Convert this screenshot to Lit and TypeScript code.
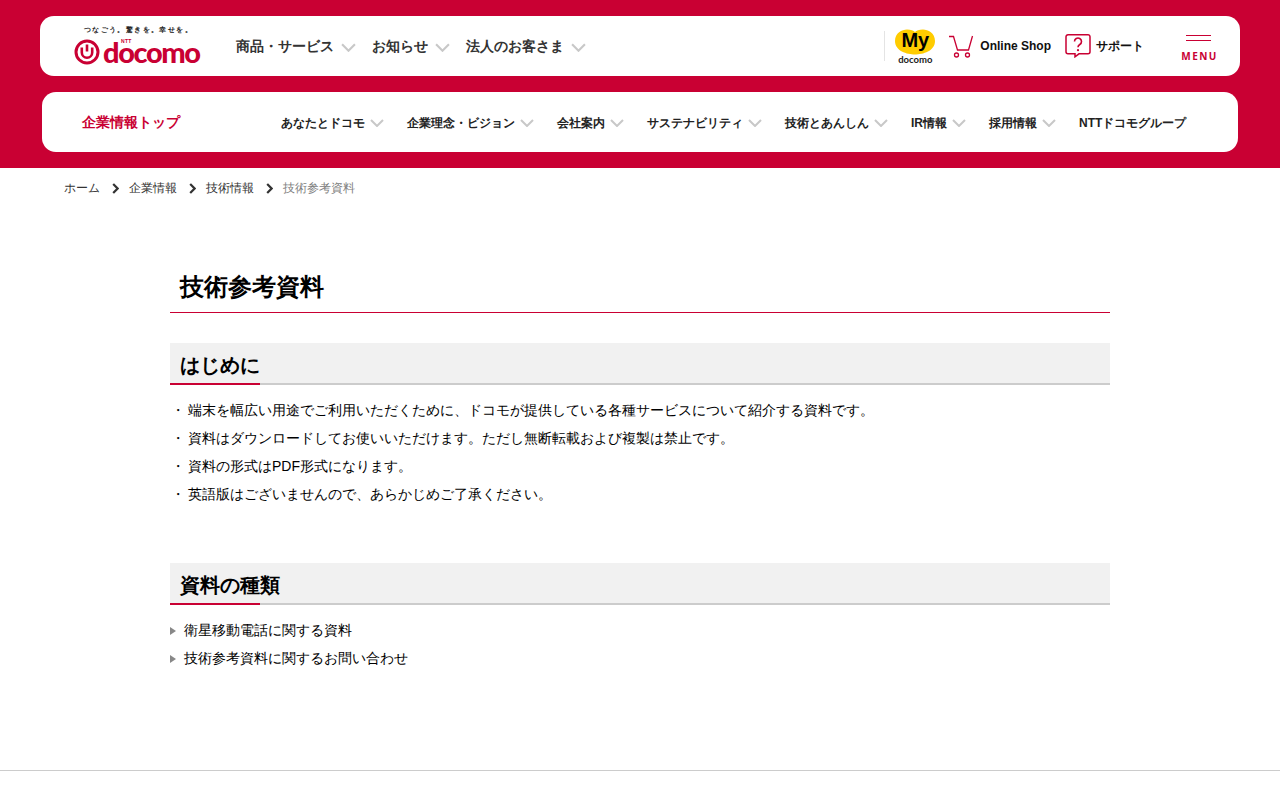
import { LitElement, html, css } from "lit";
import { customElement } from "lit/decorators.js";

const chev = (w = 14, h = 8) => html`<svg class="chev" width="${w}" height="${h}" viewBox="0 0 14 8"><path d="M1 1l6 6 6-6" fill="none" stroke="#c8c8c8" stroke-width="2"/></svg>`;
const crumbArrow = html`<svg class="crumb-arrow" width="7" height="11" viewBox="0 0 7 11"><path d="M1.200 1 5.600 5.500 1.200 10" fill="none" stroke="#333" stroke-width="2.200"/></svg>`;

@customElement("app-root")
export class AppRoot extends LitElement {
  static styles = css`
    :host { display: block; height: 800px; overflow: hidden; background: #fff; color: #000;
      font-family: "Liberation Sans", sans-serif; font-size: 14px; }
    a { color: inherit; text-decoration: none; }
    .hero { background: #c90033; height: 168px; box-sizing: border-box; padding: 16px 40px 0; }
    .card { background: #fff; height: 60px; border-radius: 14px; display: flex; align-items: center; box-sizing: border-box; }
    .logo { width: 126px; margin-left: 34px; display: flex; flex-direction: column; align-items: center; flex: none; }
    .tagline { font-size: 7px; font-weight: 700; line-height: 10px; letter-spacing: 1.400px; color: #222; white-space: nowrap; height: 10px; margin: -1px 0 0 3px; }
    .mark { display: flex; align-items: center; height: 28px; width: 126px; position: relative; margin-top: 3px; }
    .mark svg { flex: none; }
    .word { font-family: Lato, sans-serif; font-weight: 900; font-size: 29px; letter-spacing: -1.400px; color: #c90033; line-height: 28px; margin-left: 3px; margin-top: -1px; }
    .ntt { position: absolute; left: 47px; top: 0; font-size: 5px; font-weight: 700; color: #c90033; letter-spacing: .3px; line-height: 6px; }
    .main-nav { display: flex; margin: 2px 0 0 36px; gap: 16px; }
    .main-nav a { display: flex; align-items: center; font-size: 14px; font-weight: 700; color: #333; gap: 7px; white-space: nowrap; }
    .tools { margin-left: auto; display: flex; align-items: center; height: 60px; }
    .divider { width: 1px; height: 30px; background: #e4e4e4; margin-right: 10px; }
    .my { width: 40px; display: flex; flex-direction: column; align-items: center; margin-right: 13px; margin-top: 1px; }
    .my-word { font-family: Lato, sans-serif; font-size: 9.500px; line-height: 9px; font-weight: 700; color: #222; }
    .heart { position: relative; width: 40px; height: 26px; }
    .my-text { position: absolute; left: 0; right: 0; top: 0; text-align: center; font-size: 20px; line-height: 22px; font-weight: 700; color: #000; }
    .tool { display: flex; align-items: center; font-size: 12px; font-weight: 700; color: #111; white-space: nowrap; }
    .shop { gap: 6px; margin-right: 14px; }
    .support { gap: 5px; }
    .menu { width: 36px; margin: 2px 23px 0 37px; display: flex; flex-direction: column; align-items: center; color: #c90033; }
    .bars { width: 25px; height: 4px; border-top: 1px solid #c90033; border-bottom: 1px solid #c90033; margin: 3px 1px 0 0; }
    .menu-t { font-family: "Noto Sans", sans-serif; font-weight: 700; font-size: 10px; letter-spacing: 1.400px; line-height: 12px; margin: 9px 0 0 1px; white-space: nowrap; }
    .sub { margin: 16px 2px 0; padding-top: 2px; }
    .sub-top { font-size: 14px; font-weight: 700; color: #c90033; margin-left: 40px; width: 199px; flex: none; white-space: nowrap; }
    .sub-nav { display: flex; align-items: center; }
    .sub-nav a { display: flex; align-items: center; font-size: 12px; font-weight: 700; color: #222; gap: 5px; white-space: nowrap; margin-right: 23px; }
    .crumbs { display: flex; align-items: center; height: 38px; padding: 1px 0 1px 64px; font-size: 12px; color: #333; }
    .crumb-arrow { margin: 0 10px 0 12px; }
    .crumbs .cur { color: #808080; }
    main { width: 940px; margin: 0 auto; }
    h1 { margin: 60px 0 0; height: 45px; box-sizing: border-box; padding: 0 10px; border-bottom: 1px solid #c90033; font-size: 24px; line-height: 38px; font-weight: 700; }
    h2 { position: relative; margin: 30px 0 0; height: 42px; box-sizing: border-box; padding: 8px 10px 0; background: #f1f1f1; border-bottom: 2px solid #ccc; font-size: 20px; line-height: 29px; font-weight: 700; }
    h2::after { content: ""; position: absolute; left: 0; bottom: -2px; width: 90px; height: 2px; background: #c90033; }
    .notes { list-style: none; margin: 11px 0 0; padding: 0 0 0 18px; }
    .notes li { position: relative; line-height: 28px; }
    .notes li::before { content: "・"; position: absolute; left: -21px; width: 21px; text-align: center; }
    .sec2 { margin-top: 55px; }
    .links { list-style: none; margin: 12px 0 0; padding: 0; }
    .links li { display: flex; align-items: center; height: 28px; gap: 8px; }
    .links i { width: 0; height: 0; border-left: 6px solid #888; border-top: 4.5px solid transparent; border-bottom: 4.5px solid transparent; margin-top: -1px; }
    footer { border-top: 1px solid #ccc; margin-top: 97px; height: 40px; }
  `;

  render() {
    const subs = ["あなたとドコモ", "企業理念・ビジョン", "会社案内", "サステナビリティ", "技術とあんしん", "IR情報", "採用情報"];
    return html`
      <header class="hero">
        <div class="card">
          <a class="logo" href="#">
            <div class="tagline">つなごう。驚きを。幸せを。</div>
            <div class="mark">
              <svg width="26" height="26" viewBox="0 0 26 26">
                <circle cx="13" cy="13" r="11" fill="none" stroke="#c90033" stroke-width="3"/>
                <path d="M7.800 8.500v5a5.200 5.200 0 0 0 10.400 0v-5" fill="none" stroke="#c90033" stroke-width="2.600"/>
                <path d="M13 5.500v7" stroke="#c90033" stroke-width="2.600"/>
              </svg>
              <span class="word">docomo</span><span class="ntt">NTT</span>
            </div>
          </a>
          <nav class="main-nav">
            <a href="#">商品・サービス ${chev(15, 9)}</a>
            <a href="#">お知らせ ${chev(15, 9)}</a>
            <a href="#">法人のお客さま ${chev(15, 9)}</a>
          </nav>
          <div class="tools">
            <div class="divider"></div>
            <a class="my" href="#">
              <div class="heart">
                <svg width="40" height="26" viewBox="0 0 40 26"><path d="M20 25.500C12 25.500 0 22 0 12 0 4 7 .5 12 .5c4 0 6.500 1 8 2.500 1.500-1.500 4-2.500 8-2.500 5 0 12 3.500 12 11.500 0 10-12 13.500-20 13.500z" fill="#ffcc00"/></svg>
                <span class="my-text">My</span>
              </div>
              <span class="my-word">docomo</span>
            </a>
            <a class="tool shop" href="#">
              <svg width="26" height="24" viewBox="0 0 26 24" fill="none" stroke="#c90033" stroke-width="1.300">
                <path d="M1 2.500h4.500l4 13.500h11l4-14"/><circle cx="8.500" cy="21" r="2"/><circle cx="19.500" cy="21" r="2"/>
              </svg>
              <span>Online Shop</span>
            </a>
            <a class="tool support" href="#">
              <svg width="26" height="24" viewBox="0 0 26 24" fill="none">
                <path d="M3 .8h20a2 2 0 0 1 2 2v15a2 2 0 0 1-2 2h-9l-4 3v-3H3a2 2 0 0 1-2-2v-15a2 2 0 0 1 2-2z" stroke="#c90033" stroke-width="1.500"/>
                <path d="M9.500 7.500a3.500 3.500 0 1 1 5.300 3c-1.200.8-1.800 1.300-1.800 2.800" stroke="#c90033" stroke-width="1.600"/>
                <circle cx="13" cy="16.200" r="1.100" fill="#c90033"/>
              </svg>
              <span>サポート</span>
            </a>
            <a class="menu" href="#"><div class="bars"></div><div class="menu-t">MENU</div></a>
          </div>
        </div>
        <div class="card sub">
          <a class="sub-top" href="#">企業情報トップ</a>
          <nav class="sub-nav">
            ${subs.map((s) => html`<a href="#">${s}${chev()}</a>`)}
            <a href="#">NTTドコモグループ</a>
          </nav>
        </div>
      </header>
      <nav class="crumbs">
        <a href="#">ホーム</a>${crumbArrow}<a href="#">企業情報</a>${crumbArrow}<a href="#">技術情報</a>${crumbArrow}<span class="cur">技術参考資料</span>
      </nav>
      <main>
        <h1>技術参考資料</h1>
        <h2>はじめに</h2>
        <ul class="notes">
          <li>端末を幅広い用途でご利用いただくために、ドコモが提供している各種サービスについて紹介する資料です。</li>
          <li>資料はダウンロードしてお使いいただけます。ただし無断転載および複製は禁止です。</li>
          <li>資料の形式はPDF形式になります。</li>
          <li>英語版はございませんので、あらかじめご了承ください。</li>
        </ul>
        <h2 class="sec2">資料の種類</h2>
        <ul class="links">
          <li><i></i><a href="#">衛星移動電話に関する資料</a></li>
          <li><i></i><a href="#">技術参考資料に関するお問い合わせ</a></li>
        </ul>
      </main>
      <footer></footer>
    `;
  }
}
